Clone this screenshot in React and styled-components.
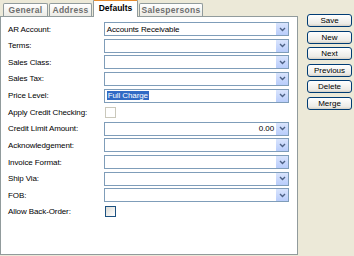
import React from 'react';
import styled, { createGlobalStyle, css } from 'styled-components';

const GlobalStyle = createGlobalStyle`
  html, body {
    margin: 0;
    padding: 0;
    background: #ece9d8;
    font-family: "Liberation Sans", Arial, sans-serif;
  }
`;

const Window = styled.div`
  display: flex;
  width: 354px;
  height: 256px;
  background: #ece9d8;
  overflow: hidden;
`;

const LeftSide = styled.div`
  display: flex;
  flex-direction: column;
  width: 298px;
`;

const TabStrip = styled.div`
  display: flex;
  align-items: flex-end;
  height: 16px;
  padding-left: 3px;
  gap: 1px;
  position: relative;
  z-index: 1;
`;

const Tab = styled.div`
  height: 13px;
  box-sizing: border-box;
  border: 1px solid #919b9c;
  border-bottom: none;
  border-radius: 2px 2px 0 0;
  background: linear-gradient(#ffffff, #ecebe5);
  color: #6f6f6f;
  font-size: 8.5px;
  font-weight: bold;
  letter-spacing: 0.3px;
  display: flex;
  align-items: center;
  justify-content: center;
  width: ${(p) => p.w}px;
  ${(p) =>
    p.active &&
    css`
      height: 18px;
      margin-bottom: -1px;
      background: #fff;
      color: #000;
      letter-spacing: 0;
      border-top: 2px solid #e68b2c;
      padding-bottom: 2px;
    `}
`;

const Panel = styled.div`
  flex: 1;
  background: #fff;
  border: 1px solid #919b9c;
  margin-bottom: 1px;
  padding: 5px 8px 0 7px;
  display: flex;
  flex-direction: column;
  gap: 2.64px;
`;

const Row = styled.div`
  display: flex;
  align-items: center;
  height: 14px;
`;

const Label = styled.div`
  width: 96px;
  font-size: 8px;
  letter-spacing: -0.1px;
  color: #000;
  white-space: nowrap;
`;

const Field = styled.div`
  width: 186px;
  height: 14px;
  box-sizing: border-box;
  border: 1px solid #7f9db9;
  display: flex;
  align-items: center;
  font-size: 8px;
  letter-spacing: -0.1px;
  padding-left: 2px;
`;

const FieldText = styled.div`
  flex: 1;
  text-align: ${(p) => (p.right ? 'right' : 'left')};
  padding-right: ${(p) => (p.right ? '2px' : '0')};
`;

const Selected = styled.span`
  background: #316ac5;
  color: #fff;
  padding: 0 1px;
`;

const DropButton = styled.div`
  width: 12px;
  height: 12px;
  background: linear-gradient(#d9e4fd, #b9cdfb);
  display: flex;
  align-items: center;
  justify-content: center;
`;

const Check = styled.div`
  width: 9px;
  height: 9px;
  border: 1px solid ${(p) => (p.disabled ? '#cac8bb' : '#1c5180')};
  background: ${(p) => (p.disabled ? '#fff' : 'linear-gradient(135deg, #dcdcd7, #fff)')};
  margin-left: 1px;
`;

const ButtonColumn = styled.div`
  display: flex;
  flex-direction: column;
  gap: 3.5px;
  padding: 14px 0 0 9px;
`;

const Button = styled.div`
  width: 45px;
  height: 13px;
  box-sizing: border-box;
  border: 1px solid #003c74;
  border-radius: 3px;
  background: linear-gradient(#ffffff, #ecebe6 80%, #d6d0c5);
  font-size: 8px;
  display: flex;
  align-items: center;
  justify-content: center;
  color: #000;
`;

function Chevron() {
  return (
    <svg width="7" height="5" viewBox="0 0 7 5">
      <path d="M1 1 L3.5 3.5 L6 1" fill="none" stroke="#4d6185" strokeWidth="1.4" />
    </svg>
  );
}

const rows = [
  { label: 'AR Account:', type: 'select', value: 'Accounts Receivable' },
  { label: 'Terms:', type: 'select' },
  { label: 'Sales Class:', type: 'select' },
  { label: 'Sales Tax:', type: 'select' },
  { label: 'Price Level:', type: 'select', value: 'Full Charge', selected: true },
  { label: 'Apply Credit Checking:', type: 'check', disabled: true },
  { label: 'Credit Limit Amount:', type: 'select', value: '0.00', right: true },
  { label: 'Acknowledgement:', type: 'select' },
  { label: 'Invoice Format:', type: 'select' },
  { label: 'Ship Via:', type: 'select' },
  { label: 'FOB:', type: 'select' },
  { label: 'Allow Back-Order:', type: 'check' },
];

const tabs = [
  { name: 'General', w: 45 },
  { name: 'Address', w: 43 },
  { name: 'Defaults', w: 45, active: true },
  { name: 'Salespersons', w: 64 },
];

const buttons = ['Save', 'New', 'Next', 'Previous', 'Delete', 'Merge'];

export default function App() {
  return (
    <Window>
      <GlobalStyle />
      <LeftSide>
        <TabStrip>
          {tabs.map((t) => (
            <Tab key={t.name} w={t.w} active={t.active}>
              {t.name}
            </Tab>
          ))}
        </TabStrip>
        <Panel>
          {rows.map((r) => (
            <Row key={r.label}>
              <Label>{r.label}</Label>
              {r.type === 'check' ? (
                <Check disabled={r.disabled} />
              ) : (
                <Field>
                  <FieldText right={r.right}>
                    {r.selected ? <Selected>{r.value}</Selected> : r.value}
                  </FieldText>
                  <DropButton>
                    <Chevron />
                  </DropButton>
                </Field>
              )}
            </Row>
          ))}
        </Panel>
      </LeftSide>
      <ButtonColumn>
        {buttons.map((b) => (
          <Button key={b}>{b}</Button>
        ))}
      </ButtonColumn>
    </Window>
  );
}
